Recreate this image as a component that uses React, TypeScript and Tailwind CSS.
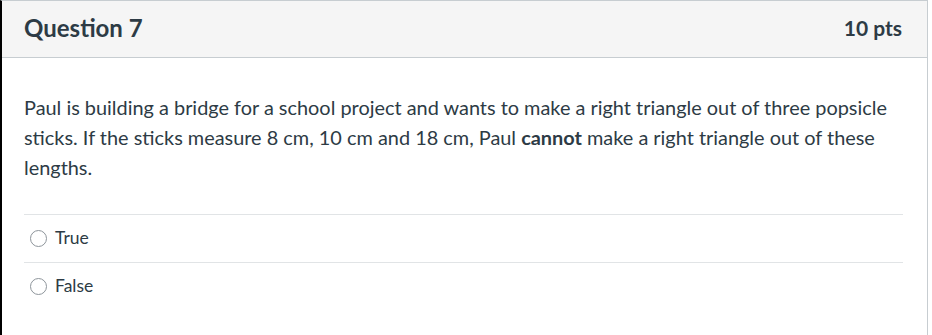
import React from "react";

const font = { fontFamily: "Lato, 'Liberation Sans', sans-serif" };

const Option: React.FC<{ label: string }> = ({ label }) => (
  <div className="flex h-[48px] items-center border-t border-[#e1e4e6]">
    <span className="ml-[6px] h-[17px] w-[17px] rounded-full border border-[#8e959b] bg-white" />
    <span className="ml-[8px] text-[17.5px] text-[#2d3b45]">{label}</span>
  </div>
);

const App: React.FC = () => {
  return (
    <div className="h-[335px] w-[932px] bg-white" style={font}>
      <div className="h-full w-[928px] border-l-2 border-r border-t border-l-black border-r-[#c7cdd1] border-t-[#c7cdd1]">
        {/* Header */}
        <div className="flex h-[57px] items-center justify-between border-b border-[#c7cdd1] bg-[#f5f5f5] pb-[2px] pl-[22px] pr-[25px]">
          <h2 className="text-[24px] font-bold text-[#2d3b45]">Question 7</h2>
          <span className="text-[21px] font-bold text-[#2d3b45]">10 pts</span>
        </div>

        {/* Body */}
        <div className="pl-[22px] pr-[24px] pt-[34px]">
          <p className="text-[19.9px] leading-[30px] text-[#2d3b45]">
            Paul is building a bridge for a school project and wants to make a right triangle out of three
            popsicle sticks. If the sticks measure 8 cm, 10 cm and 18 cm, Paul <strong>cannot</strong> make a
            right triangle out of these lengths.
          </p>

          <div className="mt-[32px]">
            <Option label="True" />
            <Option label="False" />
          </div>
        </div>
      </div>
    </div>
  );
};

export default App;
